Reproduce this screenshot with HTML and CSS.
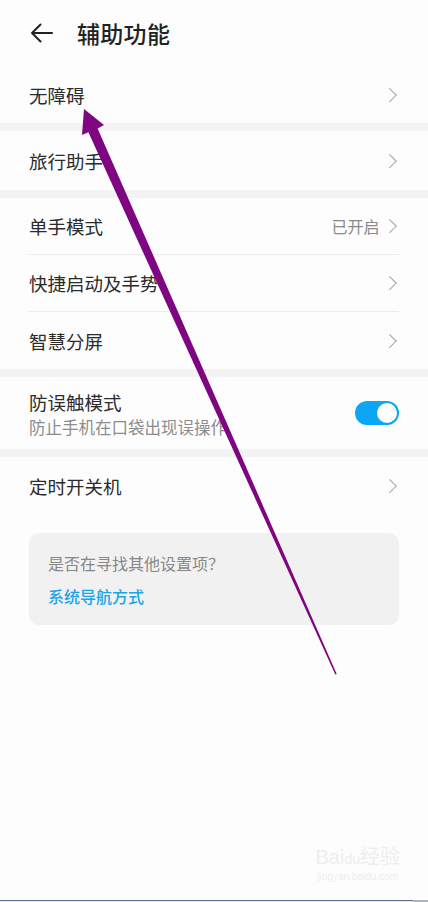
FILE: index.html
```html
<!DOCTYPE html>
<html lang="zh-CN">
<head>
    <meta charset="UTF-8">
    <meta name="viewport" content="width=device-width, initial-scale=1.0">
    <title>辅助功能</title>
    <link rel="stylesheet" href="styles.css">
</head>
<body>
    <header class="topbar">
        <svg class="back" width="24" height="24" viewBox="0 0 24 24">
            <path d="M22 12H2.5M10.5 3.5L2 12l8.5 8.5" fill="none" stroke="#222" stroke-width="2" stroke-linecap="round" stroke-linejoin="round"/>
        </svg>
        <h1>辅助功能</h1>
    </header>

    <main>
        <section class="group">
            <div class="row"><span class="label">无障碍</span><span class="chev"></span></div>
        </section>
        <section class="group">
            <div class="row tall"><span class="label">旅行助手</span><span class="chev"></span></div>
        </section>
        <section class="group">
            <div class="row"><span class="label">单手模式</span><span class="value">已开启</span><span class="chev"></span></div>
            <div class="row"><span class="label">快捷启动及手势</span><span class="chev"></span></div>
            <div class="row"><span class="label">智慧分屏</span><span class="chev"></span></div>
        </section>
        <section class="group">
            <div class="row double">
                <div class="texts">
                    <span class="label">防误触模式</span>
                    <span class="sub">防止手机在口袋出现误操作</span>
                </div>
                <span class="switch on"><span class="knob"></span></span>
            </div>
        </section>
        <section class="group last">
            <div class="row"><span class="label">定时开关机</span><span class="chev"></span></div>
        </section>

        <div class="hint">
            <p>是否在寻找其他设置项？</p>
            <a href="#">系统导航方式</a>
        </div>
    </main>

    <!-- annotation arrow drawn over the screenshot -->
    <svg class="mark" width="428" height="902" viewBox="0 0 428 902">
        <polygon fill="#7e0680" points="84,109 104,125 97.6,128.4 336.7,674 335.3,674.5 88.4,132.2 82,135"/>
    </svg>

    <div class="watermark">
        <span class="wm-logo">Bai<span class="wm-du">du</span>经验</span>
        <span class="wm-url">jingyan.baidu.com</span>
    </div>
    <div class="bottom-edge"><span></span></div>
</body>
</html>
```

FILE: styles.css
```css
@charset "UTF-8";

* {
    margin: 0;
    padding: 0;
    box-sizing: border-box;
}

html {
    height: 100%;
}

body {
    width: 428px;
    height: 902px;
    position: relative;
    overflow: hidden;
    background-color: #fdfdfd;
    font-family: "Noto Sans CJK SC", "Noto Sans", sans-serif;
    color: #2b2b2b;
}

.topbar {
    height: 66px;
    display: flex;
    align-items: center;
    padding-left: 30px;
    padding-bottom: 1px;
}
.topbar .back {margin-right: 23px;}
.topbar h1 {
    font-size: 23px;
    font-weight: 500;
    color: #222;
    letter-spacing: 0.3px;
}

.group {
    padding: 0 29px;
    border-bottom: 8px solid #f3f3f3;
}
.group.last {border-bottom: none;}

.row {
    height: 57px;
    display: flex;
    align-items: center;
    border-bottom: 1px solid #ececec;
}
.row:last-child {border-bottom: none;}
.row.tall {height: 59px;}
.row.double {height: 72px;}

.label {
    flex: 1;
    font-size: 18.5px;
    line-height: 24px;
}

.value {
    font-size: 16px;
    color: #8a8a8a;
    margin-right: 5px;
}

.chev {
    width: 9.5px;
    height: 9.5px;
    margin-right: 5px;
    border-top: 1.7px solid #a2a2a2;
    border-right: 1.7px solid #a2a2a2;
    transform: rotate(45deg);
}

.texts {
    flex: 1;
    display: flex;
    flex-direction: column;
    padding-top: 2px;
}
.texts .label {line-height: 26px;}
.texts .sub {
    font-size: 16.5px;
    line-height: 24px;
    color: #8c8c8c;
}

.switch {
    width: 44px;
    height: 24px;
    border-radius: 12px;
    background-color: #0ba7f6;
    display: flex;
    align-items: center;
    justify-content: flex-end;
    padding: 2px;
}
.knob {
    width: 20px;
    height: 20px;
    border-radius: 50%;
    background-color: #fff;
}

.hint {
    margin: 19px 29px 0;
    height: 92px;
    padding: 20px 19px 0;
    border-radius: 10px;
    background-color: #f1f1f1;
}
.hint p {
    font-size: 16px;
    line-height: 20px;
    color: #888;
}
.hint a {
    display: block;
    margin-top: 13px;
    font-size: 16px;
    line-height: 20px;
    font-weight: 500;
    color: #1ba3e6;
    text-decoration: none;
}

.mark {
    position: absolute;
    left: 0;
    top: 0;
    pointer-events: none;
}

.watermark {
    position: absolute;
    right: 28px;
    bottom: 18px;
    display: flex;
    flex-direction: column;
    align-items: center;
    color: #eeeeee;
    font-family: "Liberation Sans", "Noto Sans CJK SC", sans-serif;
}
.wm-logo {font-size: 20px; line-height: 22px;}
.wm-du {font-size: 14px;}
.wm-url {font-size: 10px; line-height: 14px;}

.bottom-edge {
    position: absolute;
    left: 0;
    bottom: 0;
    width: 100%;
    height: 2px;
    border-top: 1px solid #62748a;
    background-color: #dfe5ec;
}
.bottom-edge span {
    position: absolute;
    right: 0;
    top: -1px;
    width: 15px;
    height: 2px;
    background-color: #a9b4c0;
}
```
